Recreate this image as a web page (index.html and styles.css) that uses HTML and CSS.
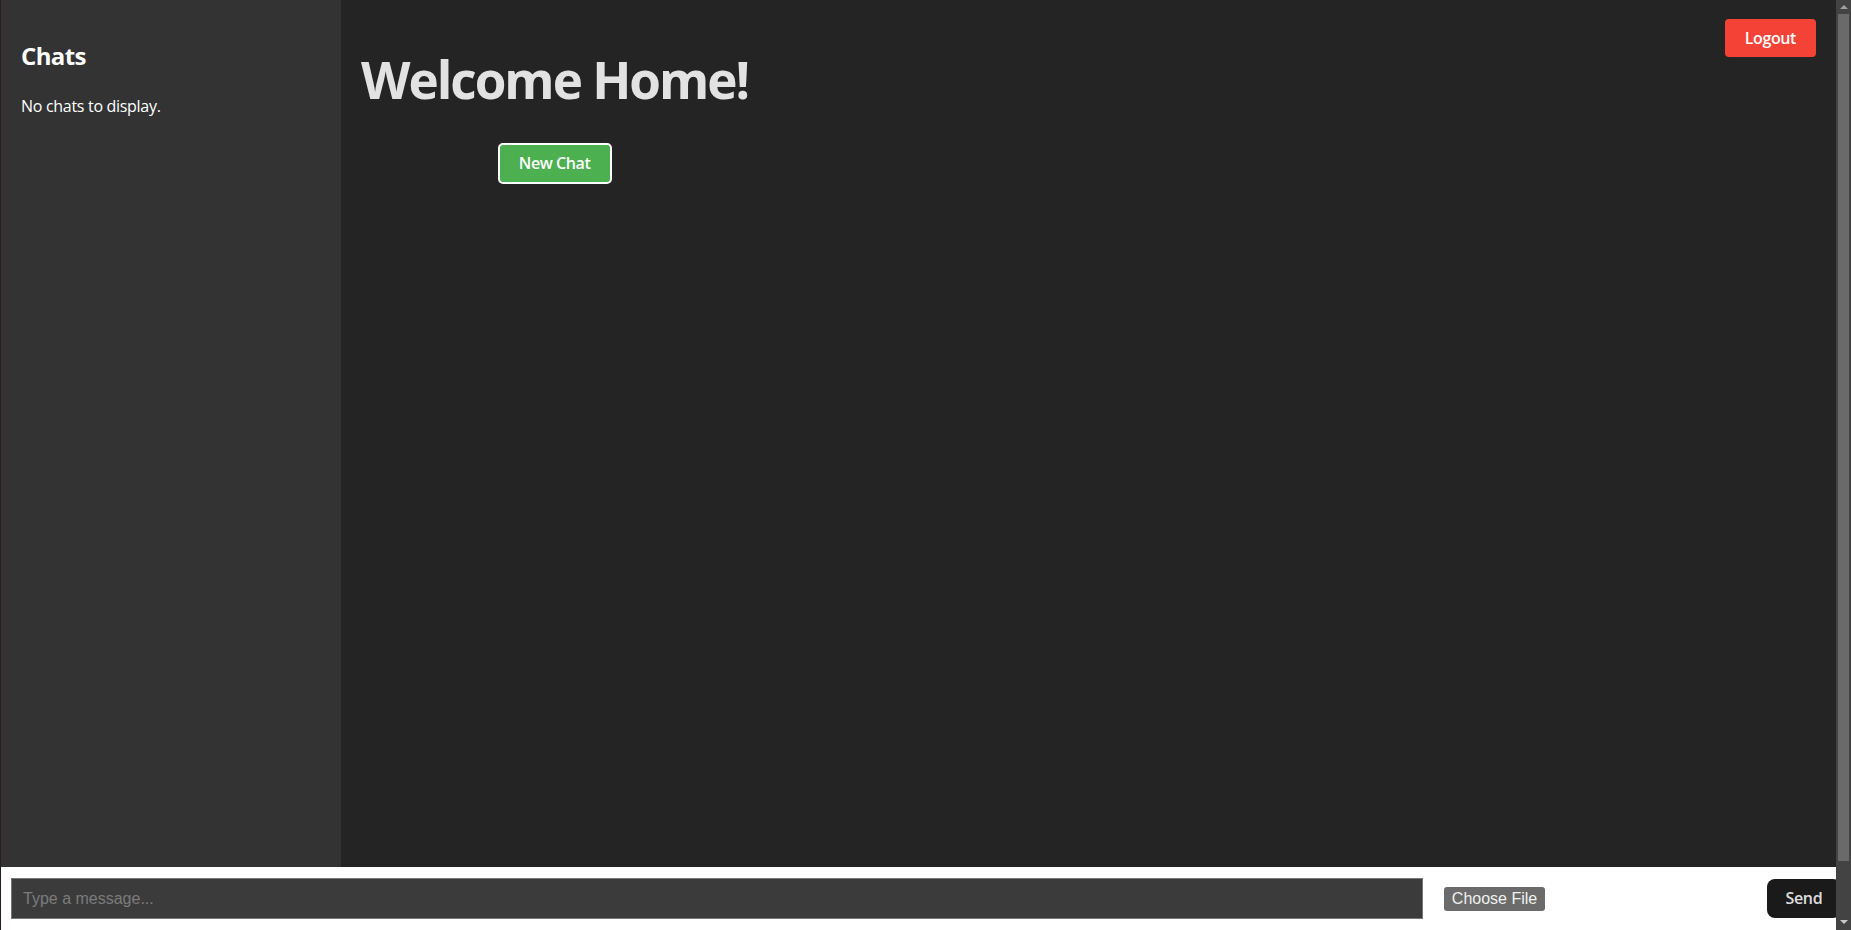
FILE: index.html
```html
<!DOCTYPE html>
<html lang="en">
<head>
<meta charset="utf-8">
<title>Home</title>
<link rel="stylesheet" href="styles.css">
</head>
<body>
<div class="page">
  <div class="app">
    <aside class="sidebar">
      <h2 class="sidebar-title">Chats</h2>
      <p class="sidebar-empty">No chats to display.</p>
    </aside>
    <main class="main">
      <button class="logout" type="button">Logout</button>
      <div class="welcome">
        <h1 class="welcome-title">Welcome Home!</h1>
        <button class="new-chat" type="button">New Chat</button>
      </div>
    </main>
  </div>
  <form class="composer">
    <input class="composer-input" type="text" placeholder="Type a message...">
    <input class="composer-file" type="file">
    <button class="composer-send" type="button">Send</button>
  </form>
</div>
<div class="scrollbar" aria-hidden="true">
  <span class="scrollbar-btn scrollbar-up"></span>
  <span class="scrollbar-thumb"></span>
  <span class="scrollbar-track"></span>
  <span class="scrollbar-btn scrollbar-down"></span>
</div>
</body>
</html>
```

FILE: styles.css
```css
:root {
  color-scheme: dark;
  font-family: "Open Sans", "Noto Sans", sans-serif;
  color: rgba(255, 255, 255, 0.87);
  background-color: #242424;
}

html, body {
  margin: 0;
  padding: 0;
  height: 100%;
  overflow: hidden;
}

body {
  background: #242424;
}

body::before {
  content: "";
  position: fixed;
  left: 0;
  top: 0;
  bottom: 0;
  width: 1px;
  background: #2a1a24;
  z-index: 10;
}

.page {
  position: relative;
  height: 100vh;
  overflow: hidden;
}

.app {
  display: flex;
  min-height: 990px;
  padding-left: 1px;
  margin-right: 15px;
}

.sidebar {
  width: 340px;
  flex: none;
  background: #333333;
  padding: 20px;
  box-sizing: border-box;
  color: #ffffff;
}

.sidebar-title {
  margin: 20px 0 22px;
  font-size: 24px;
  line-height: 32px;
  font-weight: 700;
  letter-spacing: -0.6px;
}

.sidebar-empty {
  margin: 0;
  font-size: 16px;
  line-height: 24px;
  letter-spacing: -0.3px;
}

.main {
  flex: 1;
  position: relative;
  background: #242424;
  padding: 17px 20px;
}

.welcome {
  display: inline-flex;
  flex-direction: column;
  align-items: center;
}

.welcome-title {
  margin: 34px 0 36px;
  font-size: 51.2px;
  line-height: 1.1;
  font-weight: 700;
  letter-spacing: -2px;
  color: rgba(255, 255, 255, 0.87);
}

.new-chat {
  font-family: inherit;
  font-size: 16px;
  font-weight: 600;
  letter-spacing: -0.4px;
  line-height: 17px;
  padding: 9.6px 19.2px;
  background: #4caf50;
  color: #ffffff;
  border: 2px solid #ffffff;
  border-radius: 5px;
}

.logout {
  position: absolute;
  top: 19px;
  right: 20px;
  font-family: inherit;
  font-size: 16px;
  font-weight: 600;
  letter-spacing: -0.4px;
  line-height: 18px;
  padding: 10px 20px;
  background: #f44336;
  color: #ffffff;
  border: none;
  border-radius: 4px;
}

.composer {
  position: fixed;
  left: 0;
  bottom: 0;
  width: 100vw;
  height: 63px;
  box-sizing: border-box;
  background: #ffffff;
  display: flex;
  align-items: center;
  padding: 0 10px 0 11px;
  margin: 0;
}

.composer-input {
  flex: 1;
  min-width: 0;
  height: 41px;
  box-sizing: border-box;
  background: #3b3b3b;
  border: 1px solid #767676;
  padding: 0 11px;
  font-family: "Liberation Sans", Arial, sans-serif;
  font-size: 16px;
  color: #ffffff;
  outline: none;
}

.composer-input::placeholder {
  color: #7b7b7b;
}

.composer-file {
  width: 313px;
  margin: 0 10px 0 21px;
  font-family: "Liberation Sans", Arial, sans-serif;
  font-size: 16px;
  color: #ffffff;
}

.composer-file::file-selector-button {
  font-family: "Liberation Sans", Arial, sans-serif;
  font-size: 16px;
  height: 24px;
  padding: 0 8px;
  margin-right: 8px;
  background: #6b6b6b;
  color: #f0f0f0;
  border: none;
  border-radius: 3px;
}

.composer-send {
  flex: none;
  font-family: "Open Sans", "Noto Sans", sans-serif;
  font-size: 16px;
  font-weight: 600;
  letter-spacing: -0.3px;
  line-height: 18.4px;
  padding: 9.6px 17.6px;
  background: #1a1a1a;
  color: rgba(255, 255, 255, 0.87);
  border: 1px solid transparent;
  border-radius: 8px;
}

.scrollbar {
  position: fixed;
  top: 0;
  right: 0;
  width: 15px;
  height: 100vh;
  background: #434343;
  display: flex;
  flex-direction: column;
  align-items: center;
  z-index: 20;
}

.scrollbar-btn {
  flex: none;
  width: 15px;
  height: 14px;
  display: flex;
  align-items: center;
  justify-content: center;
}

.scrollbar-up::before {
  content: "";
  border-left: 4px solid transparent;
  border-right: 4px solid transparent;
  border-bottom: 4px solid #a0a0a0;
}

.scrollbar-down {
  height: 16px;
}

.scrollbar-down::before {
  content: "";
  border-left: 4px solid transparent;
  border-right: 4px solid transparent;
  border-top: 4px solid #c8c8c8;
}

.scrollbar-thumb {
  flex: none;
  width: 11px;
  height: 847px;
  background: #6a6a6a;
}

.scrollbar-track {
  flex: 1;
}
```
